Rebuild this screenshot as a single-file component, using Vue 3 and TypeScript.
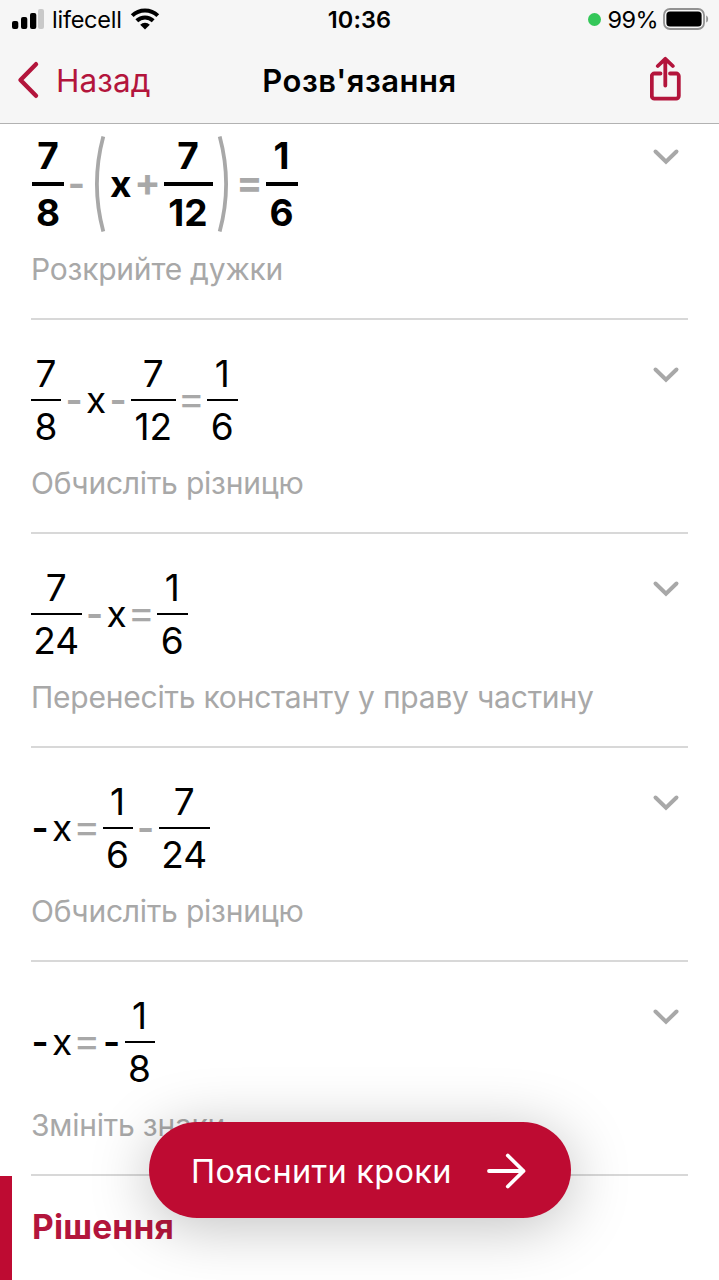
<script setup lang="ts">
type Token =
  | { kind: 'frac'; top: string; bottom: string; width: number }
  | { kind: 'op' | 'eq' | 'neg' | 'var' | 'open' | 'close'; text: string }

interface Step {
  tokens: Token[]
  label: string
  bold?: boolean
}

const frac = (top: string, bottom: string, width: number): Token => ({ kind: 'frac', top, bottom, width })
const minus: Token = { kind: 'op', text: '-' }
const negative: Token = { kind: 'neg', text: '-' }
const equals: Token = { kind: 'eq', text: '=' }
const x: Token = { kind: 'var', text: 'x' }

const steps: Step[] = [
  {
    bold: true,
    label: 'Розкрийте дужки',
    tokens: [
      frac('7', '8', 32), minus, { kind: 'open', text: '(' }, x, { kind: 'eq', text: '+' },
      frac('7', '12', 49), { kind: 'close', text: ')' }, equals, frac('1', '6', 32),
    ],
  },
  { label: 'Обчисліть різницю', tokens: [frac('7', '8', 30), minus, x, minus, frac('7', '12', 44.5), equals, frac('1', '6', 30.5)] },
  { label: 'Перенесіть константу у праву частину', tokens: [frac('7', '24', 50.5), minus, x, equals, frac('1', '6', 30.5)] },
  { label: 'Обчисліть різницю', tokens: [negative, x, equals, frac('1', '6', 30), minus, frac('7', '24', 51.5)] },
  { label: 'Змініть знаки', tokens: [negative, x, equals, negative, frac('1', '8', 30)] },
]
</script>

<template>
  <div class="screen">
    <header class="header">
      <div class="status">
        <div class="side">
          <svg class="signal" width="32" height="20" viewBox="0 0 32 20">
            <rect x="0" y="12" width="6.3" height="8" rx="2" />
            <rect x="9" y="8" width="6.3" height="12" rx="2" />
            <rect x="18" y="4" width="6.3" height="16" rx="2" />
            <rect x="26" y="0" width="6" height="20" rx="2" fill="#c9c9c9" />
          </svg>
          <span class="carrier">lifecell</span>
          <svg class="wifi" width="30" height="22" viewBox="0 0 30 22">
            <path d="M2.2 7.6A18.3 18.3 0 0 1 27.8 7.6M6.8 12.8A11.7 11.7 0 0 1 23.2 12.8" fill="none" stroke="#000" stroke-width="4" />
            <path d="M10.2 16.8a6.8 6.8 0 0 1 9.6 0L15 21.5z" />
          </svg>
        </div>
        <span class="clock">10:36</span>
        <div class="side right">
          <i class="dot"></i>
          <span class="percent">99%</span>
          <svg class="battery" width="46" height="22" viewBox="0 0 46 22">
            <rect x="1" y="1" width="40" height="20" rx="6" fill="none" stroke="#929292" stroke-width="1.8" />
            <rect x="3.4" y="3.4" width="35.2" height="15.2" rx="3.6" />
            <path d="M43.2 7.5c2.6 1 2.6 6 0 7z" fill="#929292" />
          </svg>
        </div>
      </div>
      <nav class="nav">
        <a class="back">
          <svg width="24" height="38" viewBox="0 0 24 38">
            <path d="M20 3.2L4.5 19l15.5 15.800" fill="none" stroke="#b3153c" stroke-width="4.4" stroke-linecap="round" stroke-linejoin="round" />
          </svg>
          <span>Назад</span>
        </a>
        <h1>Розв'язання</h1>
        <a class="share">
          <svg width="32" height="46" viewBox="0 0 32 46">
            <path d="M10.5 17.5H4.4a2.6 2.6 0 0 0-2.6 2.6v20a2.6 2.6 0 0 0 2.6 2.6h21.8a2.6 2.6 0 0 0 2.6-2.6v-20a2.6 2.6 0 0 0-2.6-2.6H20M15.3 29.5V3M7.8 10L15.3 2.8l7.5 7.2" fill="none" stroke="#b3153c" stroke-width="3.8" stroke-linecap="round" stroke-linejoin="round" />
          </svg>
        </a>
      </nav>
    </header>

    <main>
      <section v-for="(step, i) in steps" :key="i" class="step" :class="{ bold: step.bold }">
        <div class="body">
          <div class="formula">
            <template v-for="(t, j) in step.tokens" :key="j">
              <span v-if="t.kind === 'frac'" class="frac" :style="{ width: t.width + 'px' }">
                <span class="numerator">{{ t.top }}</span>
                <i class="bar"></i>
                <span>{{ t.bottom }}</span>
              </span>
              <svg v-else-if="t.kind === 'open' || t.kind === 'close'" class="paren" :class="t.kind" width="21" height="98" viewBox="0 0 21 98">
                <path d="M14.3 1.5Q1.5 49 14.3 96.5" fill="none" stroke="#a8a8a8" stroke-width="3.8" />
              </svg>
              <span v-else class="token" :class="t.kind">{{ t.text }}</span>
            </template>
          </div>
          <p class="label">{{ step.label }}</p>
        </div>
        <svg class="chevron" width="28" height="18" viewBox="0 0 28 18">
          <path d="M3.5 3.500L14 13.800 24.500 3.500" fill="none" stroke="#a8a8a8" stroke-width="4" stroke-linecap="round" />
        </svg>
      </section>
      <section class="solution">
        <h2>Рішення</h2>
      </section>
    </main>

    <button class="explain">
      <span class="caption">Пояснити кроки</span>
      <svg width="42" height="38" viewBox="0 0 42 38">
        <path d="M3 19H37.5M21.8 3.5L37.5 19 21.8 34.5" fill="none" stroke="#fff" stroke-width="3.8" stroke-linecap="round" stroke-linejoin="round" />
      </svg>
    </button>
  </div>
</template>

<style>
body {
  margin: 0;
  background: #fff;
}
</style>

<style scoped>
.screen {
  position: relative;
  width: 719px;
  height: 1280px;
  overflow: hidden;
  background: #fff;
  color: #000;
  font-family: Inter, "Liberation Sans", sans-serif;
}
.header {
  box-sizing: border-box;
  height: 124px;
  background: #f6f6f6;
  border-bottom: 1px solid #b2b2b2;
}
.status {
  display: grid;
  grid-template-columns: 1fr auto 1fr;
  align-items: center;
  height: 40px;
  padding: 0 10px 0 12px;
  font-size: 23.5px;
  line-height: 40px;
}
.side {
  display: flex;
  align-items: center;
}
.right {
  justify-content: flex-end;
}
.signal {
  margin-top: -2px;
}
.carrier {
  margin-left: 8px;
  letter-spacing: -0.25px;
}
.wifi {
  margin-left: 8px;
  margin-top: -2px;
}
.clock {
  margin-right: 2px;
  font-weight: 600;
  letter-spacing: 0.1px;
}
.dot {
  width: 13px;
  height: 13px;
  margin-top: -1px;
  border-radius: 50%;
  background: #34c759;
}
.percent {
  margin-left: 7px;
  letter-spacing: -0.6px;
}
.battery {
  margin-left: 5px;
  margin-top: -2px;
}
.nav {
  display: grid;
  grid-template-columns: 1fr auto 1fr;
  align-items: center;
  height: 82px;
  padding: 0 16px;
}
.back {
  display: flex;
  align-items: center;
  gap: 16px;
  margin-top: -2px;
  color: #b3153c;
  font-size: 31.5px;
  letter-spacing: 0.1px;
}
h1 {
  margin: -2px 0 0;
  font-size: 31px;
  font-weight: 600;
  letter-spacing: 0.5px;
}
.share {
  justify-self: end;
  height: 46px;
  margin-top: -4px;
  margin-right: 21px;
}
.step {
  display: flex;
  justify-content: space-between;
  box-sizing: border-box;
  height: 214px;
  margin: 0 31px;
  padding-top: 27px;
  border-bottom: 2px solid #d8d8d8;
}
.step.bold {
  height: 196px;
  padding-top: 4px;
}
.formula {
  display: flex;
  align-items: center;
  height: 106px;
  font-size: 37px;
  line-height: 52px;
}
.bold .formula {
  height: 112px;
  padding-left: 1px;
  font-weight: 700;
}
.frac {
  display: flex;
  flex-direction: column;
  text-align: center;
}
.numerator {
  position: relative;
  top: 1px;
}
.bar {
  height: 2px;
  background: #000;
}
.bold .frac {
  line-height: 54px;
}
.bold .bar {
  height: 4px;
}
.token {
  display: flex;
  justify-content: center;
  color: #a8a8a8;
}
.op {
  width: 26px;
  font-weight: 600;
}
.bold .op {
  width: 25px;
  font-weight: 700;
}
.eq {
  width: 31.5px;
  padding-bottom: 5px;
  font-size: 41px;
}
.bold .eq {
  width: 32px;
  font-size: 39px;
}
.var {
  width: 18px;
  color: #000;
  padding-bottom: 1px;
}
.bold .var {
  width: 21.5px;
}
.neg {
  width: 18px;
  margin-right: 4px;
  color: #000;
  font-weight: 600;
}
.close {
  transform: scaleX(-1);
}
.label {
  margin: 11.5px 0 0;
  color: #a8a8a8;
  font-size: 30px;
  letter-spacing: -0.22px;
  line-height: 36px;
  white-space: nowrap;
}
.bold .label {
  margin-top: 10.5px;
}
.chevron {
  margin-top: 19px;
  margin-right: 8px;
}
.bold .chevron {
  margin-top: 20px;
}
.solution {
  height: 104px;
  border-left: 12px solid #be0b32;
  padding-left: 20px;
}
h2 {
  margin: 0;
  padding-top: 31px;
  color: #b3153c;
  font-size: 33.5px;
  font-weight: 700;
  letter-spacing: 0.2px;
  line-height: 40px;
}
.explain {
  position: absolute;
  left: 149px;
  top: 1122px;
  display: flex;
  align-items: center;
  justify-content: space-between;
  width: 422px;
  height: 96px;
  padding: 2px 43px 0 42px;
  border: 0;
  border-radius: 48px;
  background: #be0b32;
  box-shadow: 0 8px 60px rgba(0, 0, 0, 0.25);
  color: #fff;
  font-family: inherit;
  font-size: 32.5px;
  letter-spacing: 0.3px;
}
</style>
